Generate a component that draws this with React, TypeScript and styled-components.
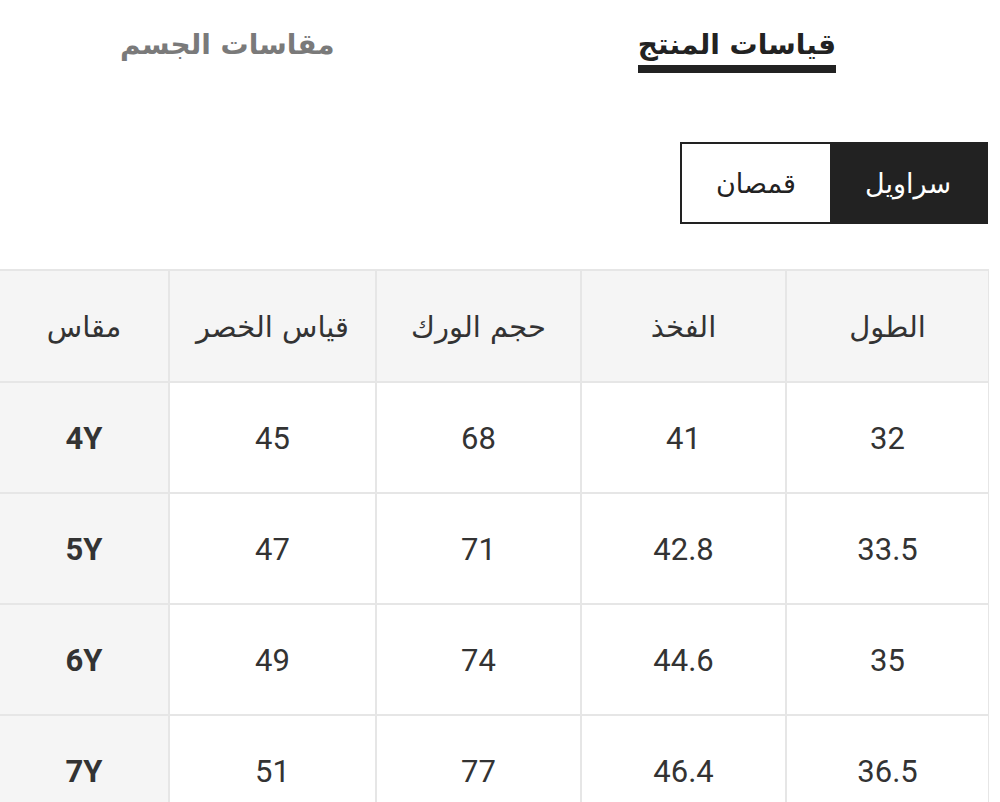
import React from "react";
import styled, { createGlobalStyle } from "styled-components";

const Global = createGlobalStyle`
  html, body { margin: 0; padding: 0; background: #fff; }
  body { font-family: "Noto Sans", "DejaVu Sans", sans-serif; }
`;

const Page = styled.div`
  width: 1000px;
  height: 802px;
  overflow: hidden;
  direction: rtl;
  background: #fff;
`;

const Tabs = styled.div`
  display: flex;
  justify-content: space-between;
  align-items: flex-start;
  padding: 25px 164px 0 120px;
  height: 120px;
  box-sizing: border-box;
`;

const Tab = styled.div<{ $active?: boolean }>`
  font-family: "DejaVu Sans", "Noto Sans", sans-serif;
  font-size: 28px;
  font-weight: bold;
  color: ${(p) => (p.$active ? "#222" : "#7a7a7a")};
  line-height: 40px;
  border-bottom: 8px solid ${(p) => (p.$active ? "#222" : "transparent")};
`;

const ToggleRow = styled.div`
  display: flex;
  justify-content: flex-start;
  padding: 22px 12px 0 0;
  height: 149px;
  box-sizing: border-box;
`;

const Toggle = styled.div`
  display: flex;
  border: 2px solid #222;
  height: 82px;
  box-sizing: border-box;
`;

const ToggleBtn = styled.div<{ $active?: boolean; $w: number }>`
  width: ${(p) => p.$w}px;
  display: flex;
  align-items: center;
  justify-content: center;
  font-family: "DejaVu Sans", "Noto Sans", sans-serif;
  font-size: 27px;
  background: ${(p) => (p.$active ? "#222" : "#fff")};
  color: ${(p) => (p.$active ? "#fff" : "#222")};
`;

const Table = styled.div`
  display: grid;
  grid-template-columns: 201px 203px 203px 205px 168px;
  grid-template-rows: 110px;
  grid-auto-rows: 109px;
  gap: 2px;
  padding: 2px 12px 0 0;
  width: 1001px;
  margin-left: -1px;
  box-sizing: border-box;
  background: linear-gradient(to left, transparent 11px, #e6e6e6 11px);
`;

const Cell = styled.div<{ $head?: boolean; $grey?: boolean; $bold?: boolean }>`
  display: flex;
  align-items: center;
  justify-content: center;
  background: ${(p) => (p.$head || p.$grey ? "#f5f5f5" : "#fff")};
  color: #333;
  font-family: ${(p) =>
    p.$head ? `"DejaVu Sans", "Noto Sans", sans-serif` : `Roboto, "Liberation Sans", sans-serif`};
  font-size: ${(p) => (p.$head ? "29px" : "31px")};
  font-weight: ${(p) => (p.$bold ? 700 : 400)};
  padding-top: ${(p) => (p.$head ? "2px" : "2px")};
`;

const headers = ["الطول", "الفخذ", "حجم الورك", "قياس الخصر", "مقاس"];
const rows = [
  ["32", "41", "68", "45", "4Y"],
  ["33.5", "42.8", "71", "47", "5Y"],
  ["35", "44.6", "74", "49", "6Y"],
  ["36.5", "46.4", "77", "51", "7Y"],
];

export default function App() {
  return (
    <Page>
      <Global />
      <Tabs>
        <Tab $active>قياسات المنتج</Tab>
        <Tab>مقاسات الجسم</Tab>
      </Tabs>
      <ToggleRow>
        <Toggle>
          <ToggleBtn $active $w={156}>سراويل</ToggleBtn>
          <ToggleBtn $w={148}>قمصان</ToggleBtn>
        </Toggle>
      </ToggleRow>
      <Table>
        {headers.map((h) => (
          <Cell key={h} $head>
            {h}
          </Cell>
        ))}
        {rows.map((r) =>
          r.map((v, i) => (
            <Cell key={r[4] + i} $grey={i === 4} $bold={i === 4}>
              {v}
            </Cell>
          ))
        )}
      </Table>
    </Page>
  );
}
